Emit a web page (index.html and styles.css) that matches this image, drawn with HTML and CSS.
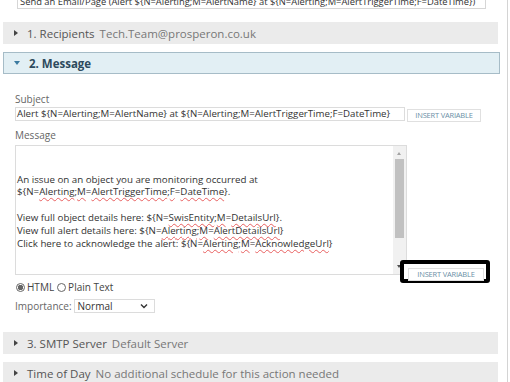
FILE: index.html
```html
<!DOCTYPE html>
<html>
<head>
    <title>Edit Action</title>
    <link rel="stylesheet" href="styles.css">
</head>
<body>
    <div class="page">
        <div class="title-row">
            <div class="title-box">Send an Email/Page (Alert ${N=Alerting;M=AlertName} at ${N=Alerting;M=AlertTriggerTime;F=DateTime})</div>
        </div>

        <div class="section">
            <span class="arrow right"></span>
            <span class="sec-name">1. Recipients</span>
            <span class="sec-info">Tech.Team@prosperon.co.uk</span>
        </div>

        <div class="section open">
            <span class="arrow down"></span>
            <span class="sec-name">2. Message</span>
        </div>

        <div class="section-body">
            <div class="field-label">Subject</div>
            <div class="field-row">
                <div class="text-input subject">Alert ${N=Alerting;M=AlertName} at ${N=Alerting;M=AlertTriggerTime;F=DateTime}</div>
                <button class="var-btn">INSERT VARIABLE</button>
            </div>

            <div class="field-label msg-label">Message</div>
            <div class="field-row msg-row">
                <div class="textarea">
                    <div class="textarea-text">
                        <div>&nbsp;</div>
                        <div>&nbsp;</div>
                        <div>An issue on an object you are monitoring occurred at</div>
                        <div>${N=<span class="sp">Alerting</span>;<span class="sp">M</span>=<span class="sp">AlertTriggerTime</span>;<span class="sp">F</span>=<span class="sp">DateTime</span>}.</div>
                        <div>&nbsp;</div>
                        <div>View full object details here: ${N=<span class="sp">SwisEntity</span>;<span class="sp">M</span>=<span class="sp">DetailsUrl</span>}.</div>
                        <div>View full alert details here: ${N=<span class="sp">Alerting</span>;<span class="sp">M</span>=<span class="sp">AlertDetailsUrl</span>}</div>
                        <div>Click here to acknowledge the alert: ${N=<span class="sp">Alerting</span>;<span class="sp">M</span>=<span class="sp">AcknowledgeUrl</span>}</div>
                    </div>
                    <div class="scrollbar">
                        <span class="scroll-up"></span>
                        <span class="scroll-thumb"></span>
                        <span class="scroll-down"></span>
                    </div>
                </div>
                <div class="highlight">
                    <button class="var-btn">INSERT VARIABLE</button>
                </div>
            </div>

            <div class="format-row">
                <span class="radio checked"></span><span class="radio-text">HTML</span>
                <span class="radio"></span><span class="radio-text">Plain Text</span>
            </div>

            <div class="importance-row">
                <span class="imp-label">Importance:</span>
                <div class="select">
                    <span>Normal</span>
                    <svg width="8" height="6" viewBox="0 0 8 6"><path d="M1 1.5 L4 4.5 L7 1.5" fill="none" stroke="#333" stroke-width="1.4"/></svg>
                </div>
            </div>
        </div>

        <div class="section smtp">
            <span class="arrow right"></span>
            <span class="sec-name">3. SMTP Server</span>
            <span class="sec-info">Default Server</span>
        </div>

        <div class="section tod">
            <span class="arrow right"></span>
            <span class="sec-name">Time of Day</span>
            <span class="sec-info">No additional schedule for this action needed</span>
        </div>
    </div>
</body>
</html>
```

FILE: styles.css
```css
* { box-sizing: border-box; }

body {
    margin: 0;
    background: white;
    color: #333;
    font-family: "Open Sans", sans-serif;
    font-size: 10px;
}

.page {
    width: 508px;
    height: 382px;
    overflow: hidden;
    border-right: 1px solid #d4d4d4;
    padding: 0 9px 0 3px;
}

.title-row {
    display: flow-root;
    height: 9px;
    padding-left: 14px;
}

.title-box {
    width: 469px;
    height: 16px;
    margin-top: -7px;
    border: 1px solid #d6d6d6;
    padding: 1px 2px;
    font-size: 9.4px;
    line-height: 13px;
    white-space: nowrap;
    overflow: hidden;
}

.section {
    display: flex;
    align-items: center;
    height: 22px;
    margin-top: 13px;
    padding-left: 11px;
    background: #ebebeb;
    font-size: 11.5px;
    white-space: nowrap;
}

.section.open {
    height: 22px;
    margin-top: 8px;
    margin-right: -2px;
    background: #e2eff4;
    border: 1px solid #a6bcc7;
    padding-left: 10px;
}

.section.open .sec-name {
    font-weight: bold;
    color: #2d4a5d;
}

.arrow {
    width: 0;
    height: 0;
    margin-right: 9px;
}

.arrow.right {
    border-top: 3px solid transparent;
    border-bottom: 3px solid transparent;
    border-left: 4px solid #444;
}

.arrow.down {
    border-left: 3px solid transparent;
    border-right: 3px solid transparent;
    border-top: 4px solid #3b7aa0;
}

.sec-name {
    color: #555;
    margin-right: 5px;
}

.sec-info {
    color: #777;
}

.section-body {
    padding: 19px 0 19px 12px;
}

.field-label {
    color: #666;
    line-height: 13px;
}

.field-row {
    display: flex;
    align-items: flex-start;
    margin-top: 1px;
}

.text-input {
    width: 390px;
    height: 14px;
    border: 1px solid #dcdcdc;
    padding: 0 1px;
    font-size: 9.7px;
    line-height: 12px;
    white-space: nowrap;
    overflow: hidden;
}

.var-btn {
    margin: 2px 0 0 2px;
    width: 74px;
    height: 13px;
    padding: 0;
    background: white;
    border: 1px solid #e0e0e0;
    color: #6b8fa6;
    font-family: "Open Sans", sans-serif;
    font-size: 7.5px;
    letter-spacing: -0.2px;
    line-height: 11px;
}

.msg-label {
    margin-top: 7px;
}

.msg-row {
    position: relative;
    margin-top: 3px;
}

.textarea {
    position: relative;
    width: 392px;
    height: 130px;
    border: 1px solid #dcdcdc;
    overflow: hidden;
}

.textarea-text {
    padding: 2px 0 0 1px;
    font-size: 9.75px;
    line-height: 12.8px;
    white-space: nowrap;
}

.sp {
    text-decoration: underline wavy #e86060;
    text-decoration-thickness: 1px;
    text-underline-offset: 2px;
}

.scrollbar {
    position: absolute;
    top: 0;
    right: 0;
    width: 13px;
    height: 100%;
    background: #f1f1f1;
}

.scroll-up, .scroll-down {
    position: absolute;
    left: 4px;
    width: 0;
    height: 0;
    border-left: 2.5px solid transparent;
    border-right: 2.5px solid transparent;
}

.scroll-up {
    top: 6px;
    border-bottom: 3px solid #a3a3a3;
}

.scroll-down {
    bottom: 6px;
    border-top: 3px solid #505050;
}

.scroll-thumb {
    position: absolute;
    top: 13px;
    left: 2px;
    width: 9px;
    height: 79px;
    background: #c1c1c1;
}

.highlight {
    position: absolute;
    left: 385px;
    top: 115px;
    width: 90px;
    height: 23px;
    border: 4px solid #000;
    border-radius: 3px;
    background: white;
    padding: 2px 0 0 4px;
}

.highlight .var-btn {
    margin: 0;
    width: 76px;
    height: 13px;
}

.format-row {
    display: flex;
    align-items: center;
    margin-top: 6px;
    height: 12px;
}

.radio {
    width: 9px;
    height: 9px;
    border: 1px solid #666;
    border-radius: 50%;
    margin: 0 2px 0 1px;
    background: white;
}

.radio.checked {
    background: radial-gradient(circle, #666 0 2.5px, white 3px);
}

.radio-text {
    color: #444;
    margin-right: 2px;
}

.importance-row {
    display: flex;
    align-items: center;
    margin-top: 6px;
}

.imp-label {
    color: #666;
    margin-right: 2px;
}

.select {
    display: flex;
    align-items: center;
    justify-content: space-between;
    width: 81px;
    height: 14px;
    border: 1px solid #dcdcdc;
    padding: 0 6px 0 3px;
    color: #333;
}

.section.smtp {
    margin-top: 0;
}

.section.tod {
    margin-top: 8px;
}
```
